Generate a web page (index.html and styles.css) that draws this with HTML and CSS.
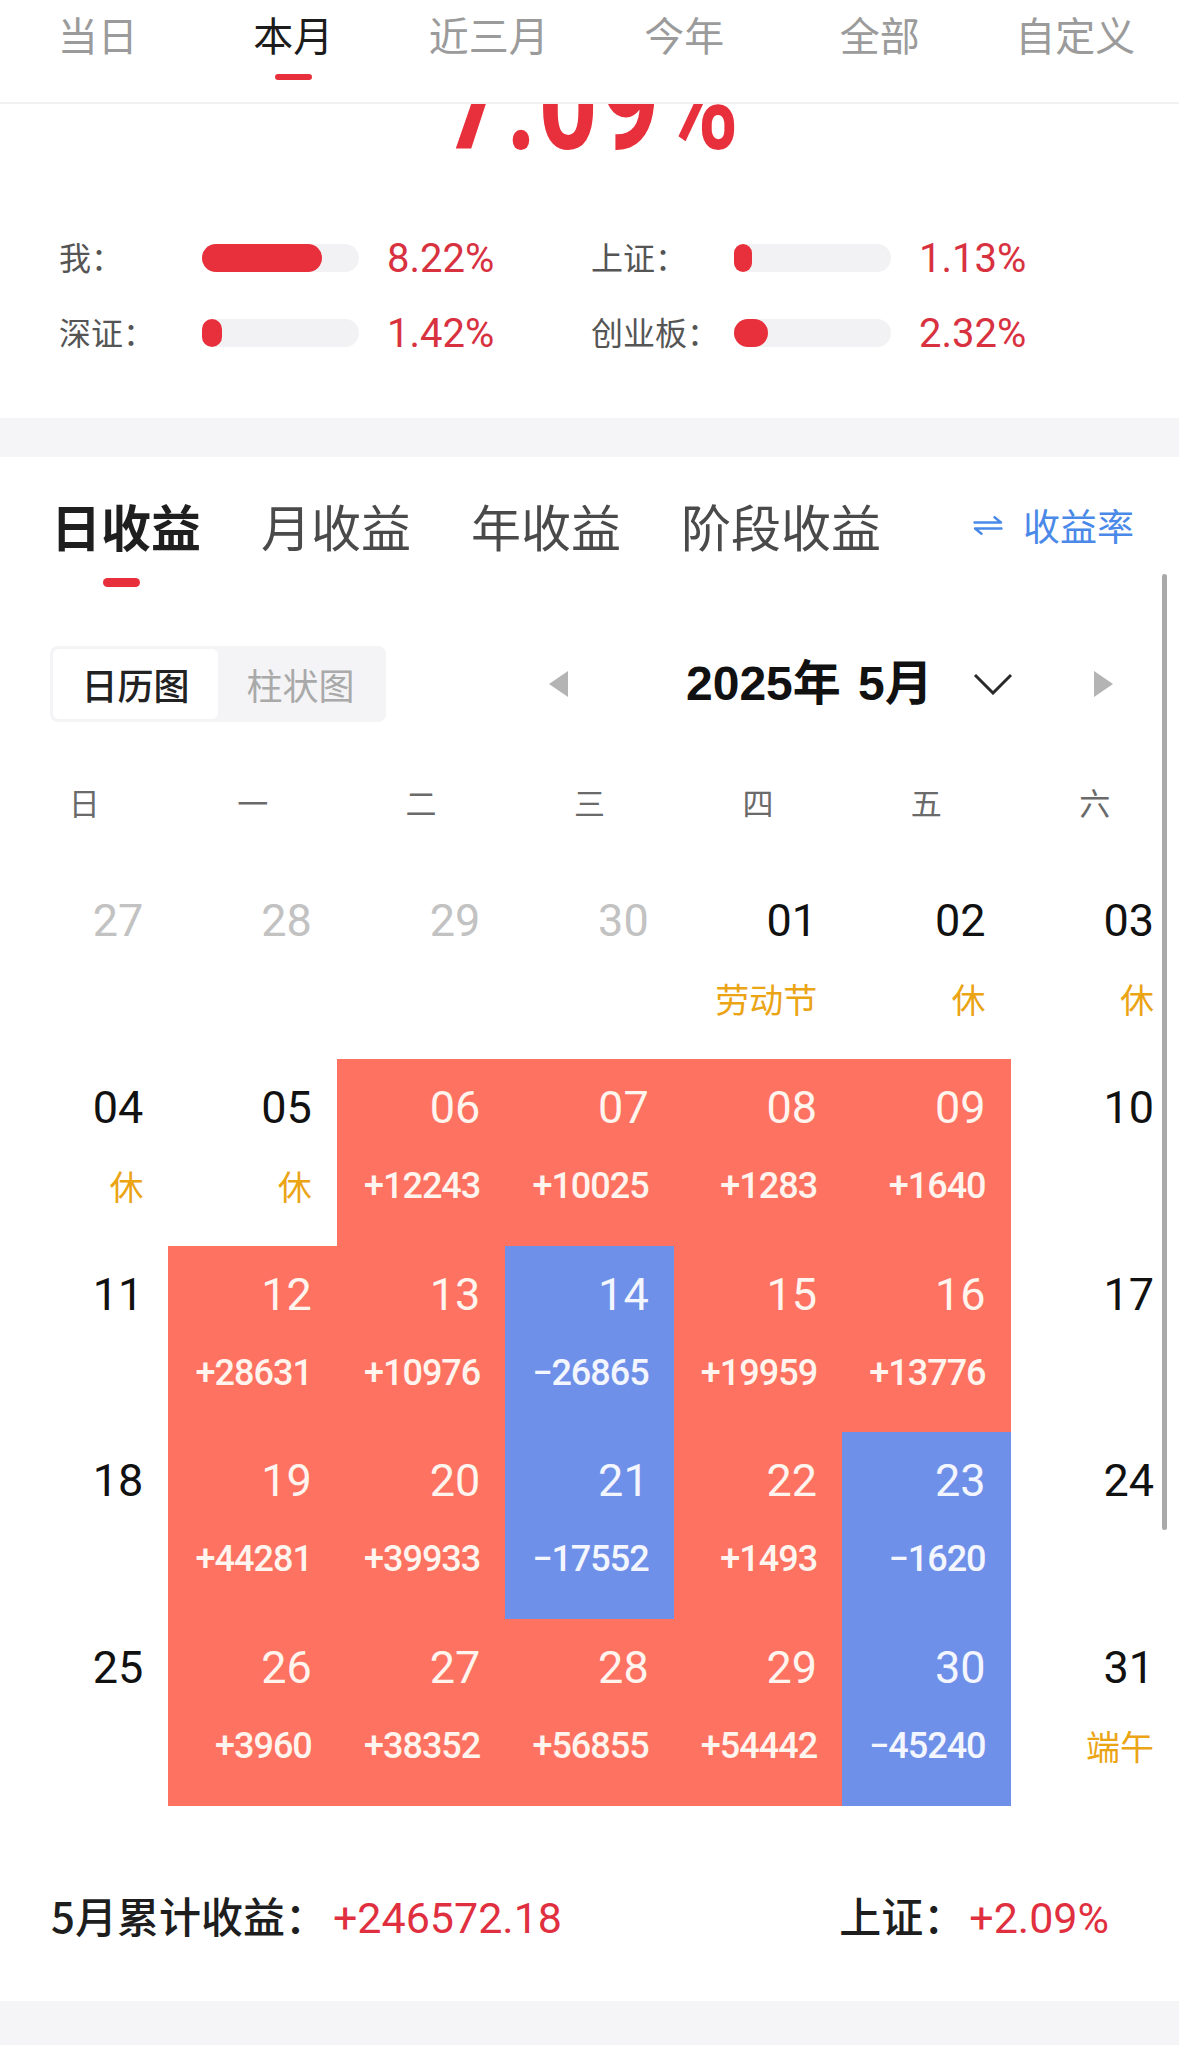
FILE: index.html
```html
<!DOCTYPE html>
<html lang="zh-CN">
<head>
<meta charset="utf-8">
<title>收益日历</title>
<link rel="stylesheet" href="styles.css">
</head>
<body>
<div class="page">
  <header class="topbar">
    <div class="period">当日</div>
    <div class="period active">本月<span class="period-line"></span></div>
    <div class="period">近三月</div>
    <div class="period">今年</div>
    <div class="period">全部</div>
    <div class="period">自定义</div>
  </header>

  <div class="hero"><div class="hero-num">7.09%</div></div>

  <section class="stats">
    <div class="stat"><span class="stat-label">我：</span><span class="track"><span class="fill" style="width:120px"></span></span><span class="stat-pct">8.22%</span></div>
    <div class="stat"><span class="stat-label">上证：</span><span class="track"><span class="fill" style="width:18px"></span></span><span class="stat-pct">1.13%</span></div>
    <div class="stat"><span class="stat-label">深证：</span><span class="track"><span class="fill" style="width:20px"></span></span><span class="stat-pct">1.42%</span></div>
    <div class="stat"><span class="stat-label">创业板：</span><span class="track"><span class="fill" style="width:34px"></span></span><span class="stat-pct">2.32%</span></div>
  </section>

  <div class="band"></div>

  <section class="profit">
    <div class="ptabs">
      <div class="ptab active">日收益<span class="ptab-line"></span></div>
      <div class="ptab">月收益</div>
      <div class="ptab">年收益</div>
      <div class="ptab">阶段收益</div>
      <div class="rate">
        <svg class="rate-icon" width="30" height="19" viewBox="0 0 30 19"><path d="M1.5 6.5 H28 L21.5 1.2" fill="none" stroke="#4a89e8" stroke-width="2.4" stroke-linecap="round" stroke-linejoin="round"/><path d="M28.5 12.5 H2 L8.5 17.8" fill="none" stroke="#4a89e8" stroke-width="2.4" stroke-linecap="round" stroke-linejoin="round"/></svg>
        <span>收益率</span>
      </div>
    </div>

    <div class="controls">
      <div class="seg">
        <div class="seg-item active">日历图</div>
        <div class="seg-item">柱状图</div>
      </div>
      <span class="tri tri-left"></span>
      <span class="month">2025年 5月</span>
      <svg class="chev" width="40" height="22" viewBox="0 0 40 22"><polyline points="2,2 20,20 38,2" fill="none" stroke="#2a2a2a" stroke-width="3"/></svg>
      <span class="tri tri-right"></span>
    </div>

    <div class="weekdays">
      <span>日</span><span>一</span><span>二</span><span>三</span><span>四</span><span>五</span><span>六</span>
    </div>

    <div class="cal">
      <div class="cell muted"><div class="d">27</div></div>
      <div class="cell muted"><div class="d">28</div></div>
      <div class="cell muted"><div class="d">29</div></div>
      <div class="cell muted"><div class="d">30</div></div>
      <div class="cell"><div class="d">01</div><div class="h">劳动节</div></div>
      <div class="cell"><div class="d">02</div><div class="h">休</div></div>
      <div class="cell"><div class="d">03</div><div class="h">休</div></div>

      <div class="cell"><div class="d">04</div><div class="h">休</div></div>
      <div class="cell"><div class="d">05</div><div class="h">休</div></div>
      <div class="cell up"><div class="d">06</div><div class="v">+12243</div></div>
      <div class="cell up"><div class="d">07</div><div class="v">+10025</div></div>
      <div class="cell up"><div class="d">08</div><div class="v">+1283</div></div>
      <div class="cell up"><div class="d">09</div><div class="v">+1640</div></div>
      <div class="cell"><div class="d">10</div></div>

      <div class="cell"><div class="d">11</div></div>
      <div class="cell up"><div class="d">12</div><div class="v">+28631</div></div>
      <div class="cell up"><div class="d">13</div><div class="v">+10976</div></div>
      <div class="cell down"><div class="d">14</div><div class="v">−26865</div></div>
      <div class="cell up"><div class="d">15</div><div class="v">+19959</div></div>
      <div class="cell up"><div class="d">16</div><div class="v">+13776</div></div>
      <div class="cell"><div class="d">17</div></div>

      <div class="cell"><div class="d">18</div></div>
      <div class="cell up"><div class="d">19</div><div class="v">+44281</div></div>
      <div class="cell up"><div class="d">20</div><div class="v">+39933</div></div>
      <div class="cell down"><div class="d">21</div><div class="v">−17552</div></div>
      <div class="cell up"><div class="d">22</div><div class="v">+1493</div></div>
      <div class="cell down"><div class="d">23</div><div class="v">−1620</div></div>
      <div class="cell"><div class="d">24</div></div>

      <div class="cell"><div class="d">25</div></div>
      <div class="cell up"><div class="d">26</div><div class="v">+3960</div></div>
      <div class="cell up"><div class="d">27</div><div class="v">+38352</div></div>
      <div class="cell up"><div class="d">28</div><div class="v">+56855</div></div>
      <div class="cell up"><div class="d">29</div><div class="v">+54442</div></div>
      <div class="cell down"><div class="d">30</div><div class="v">−45240</div></div>
      <div class="cell"><div class="d">31</div><div class="h">端午</div></div>
    </div>

    <div class="summary">
      <div class="sum-left"><span class="sum-label">5月累计收益：</span><span class="sum-val">+246572.18</span></div>
      <div class="sum-right"><span class="sum-label">上证：</span><span class="sum-val">+2.09%</span></div>
    </div>
  </section>

  <div class="band band-bottom"></div>

  <div class="scrollbar"></div>
</div>
</body>
</html>
```

FILE: styles.css
```css
* { box-sizing: border-box; }
html, body { margin: 0; padding: 0; background: #fff; }
body {
  font-family: "Noto Sans CJK SC", "Noto Sans", sans-serif;
  color: #222;
  overflow: hidden;
}
.page {
  position: relative;
  width: 1179px;
  height: 2045px;
  overflow: hidden;
}

/* top period tabs */
.topbar {
  display: grid;
  grid-template-columns: repeat(6, 195.5px);
  height: 104px;
  border-bottom: 2px solid #f1f1f3;
}
.period {
  display: flex;
  flex-direction: column;
  align-items: center;
  padding-top: 14px;
  font-size: 40px;
  line-height: 40px;
  color: #9b9b9b;
}
.period.active { color: #1c1c1c; }
.period-line {
  display: block;
  width: 37px;
  height: 6px;
  margin-top: 20px;
  border-radius: 3px;
  background: #e8303c;
}

/* clipped hero value */
.hero {
  height: 48px;
  overflow: hidden;
  display: flex;
  justify-content: center;
}
.hero-num {
  margin-top: -42px;
  font-family: Roboto, "Liberation Sans", sans-serif;
  font-weight: 700;
  font-size: 104px;
  line-height: 104px;
  color: #e8303c;
  padding-left: 6px;
  letter-spacing: 2px;
  transform: scaleY(1.32);
  transform-origin: 50% 88px;
}

/* comparison bars */
.stats {
  display: grid;
  grid-template-columns: 532px auto;
  row-gap: 35px;
  padding: 0 0 65px 59px;
  margin-top: 86px;
}
.stat {
  display: flex;
  align-items: center;
  height: 40px;
}
.stat-label {
  width: 143px;
  font-size: 32px;
  line-height: 40px;
  color: #555;
  margin-top: -4px;
}
.track {
  position: relative;
  display: block;
  width: 157px;
  height: 28px;
  border-radius: 14px;
  background: #f2f2f4;
}
.fill {
  display: block;
  height: 28px;
  border-radius: 14px;
  background: #e8303c;
}
.stat-pct {
  margin-left: 28px;
  font-family: Roboto, "Liberation Sans", sans-serif;
  font-size: 40px;
  color: #d8313f;
}

.band {
  height: 39px;
  background: #f5f5f7;
}

/* profit tabs */
.ptabs {
  display: flex;
  align-items: flex-start;
  padding: 43px 45px 0 51px;
}
.ptab {
  display: flex;
  flex-direction: column;
  align-items: center;
  margin-right: 60px;
  font-size: 50px;
  line-height: 50px;
  color: #4a4a4a;
}
.ptab.active {
  font-weight: 700;
  color: #1f1f1f;
}
.ptab-line {
  display: block;
  width: 37px;
  height: 9px;
  margin-top: 28px;
  margin-right: 10px;
  border-radius: 5px;
  background: #e8303c;
}
.rate {
  margin-left: auto;
  display: flex;
  align-items: center;
  height: 50px;
  font-size: 37px;
  color: #4a89e8;
}
.rate-icon { margin-right: 20px; }

/* calendar controls */
.controls {
  display: flex;
  align-items: center;
  margin-top: 59px;
  padding-left: 50px;
  height: 76px;
}
.seg {
  display: flex;
  padding: 3px;
  border-radius: 8px;
  background: #f4f4f6;
}
.seg-item {
  width: 165px;
  height: 70px;
  line-height: 70px;
  text-align: center;
  font-size: 36px;
  color: #a9a9a9;
  border-radius: 6px;
}
.seg-item.active {
  background: #fff;
  color: #222;
  font-weight: 500;
}
.tri {
  display: block;
  width: 0;
  height: 0;
  border-top: 13px solid transparent;
  border-bottom: 13px solid transparent;
}
.tri-left {
  margin-left: 163px;
  border-right: 19px solid #b4b4b4;
}
.tri-right {
  margin-left: 81px;
  border-left: 19px solid #b4b4b4;
}
.month {
  margin-left: 118px;
  font-family: "Liberation Sans", "Noto Sans CJK SC", sans-serif;
  font-weight: 700;
  font-size: 48px;
  line-height: 60px;
  color: #111;
  word-spacing: 4px;
}
.chev { margin-left: 40px; }

.weekdays {
  display: grid;
  grid-template-columns: repeat(7, 1fr);
  margin-top: 50px;
  height: 60px;
  line-height: 60px;
  text-align: center;
  font-size: 31px;
  color: #6a6a6a;
}

.cal {
  display: grid;
  grid-template-columns: repeat(7, 1fr);
  grid-auto-rows: 186.8px;
  margin-top: 40px;
}
.cell {
  padding: 24px 25px 0 0;
  text-align: right;
  color: #111;
}
.cell.muted { color: #c2c2c2; }
.cell.up { background: #fe7262; color: #fff5ee; }
.cell.down { background: #6f90e8; color: #f4f6ff; }
.d {
  font-family: Roboto, "Liberation Sans", sans-serif;
  font-size: 45px;
  line-height: 50px;
}
.v {
  margin-top: 28px;
  font-family: Roboto, "Liberation Sans", sans-serif;
  font-weight: 500;
  font-size: 36px;
  line-height: 50px;
  letter-spacing: -1px;
}
.h {
  margin-top: 28px;
  font-size: 34px;
  line-height: 50px;
  color: #eaa414;
}

/* summary */
.summary {
  display: flex;
  justify-content: space-between;
  align-items: center;
  margin-top: 84px;
  padding: 0 70px 0 51px;
  height: 50px;
}
.sum-label {
  font-size: 42px;
  font-weight: 500;
  color: #1e1e1e;
}
.sum-val {
  font-family: Roboto, "Liberation Sans", sans-serif;
  font-size: 43px;
  color: #e0303f;
}
.sum-left .sum-val { margin-left: 6px; }
.sum-right .sum-val { margin-left: 4px; }

.band-bottom {
  margin-top: 61px;
  height: 60px;
}

.scrollbar {
  position: absolute;
  left: 1162px;
  top: 574px;
  width: 5px;
  height: 956px;
  border-radius: 3px;
  background: #a9a9a9;
}
```
